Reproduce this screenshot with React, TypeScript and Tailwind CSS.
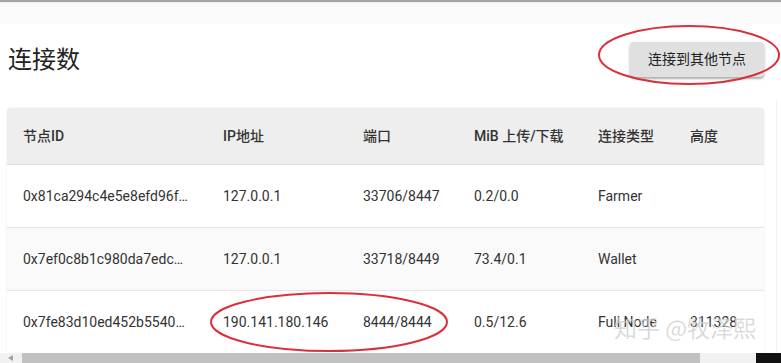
import React from "react";

const rows = [
  { id: "0x81ca294c4e5e8efd96f0a1b2c3d4", ip: "127.0.0.1", port: "33706/8447", mib: "0.2/0.0", type: "Farmer", h: "", bg: "bg-white" },
  { id: "0x7ef0c8b1c980da7edc0a1b2c3d4e", ip: "127.0.0.1", port: "33718/8449", mib: "73.4/0.1", type: "Wallet", h: "", bg: "bg-[#fafafa]" },
  { id: "0x7fe83d10ed452b55400a1b2c3d4e", ip: "190.141.180.146", port: "8444/8444", mib: "0.5/12.6", type: "Full Node", h: "311328", bg: "bg-white" },
];

const font = { fontFamily: 'Roboto, "Noto Sans CJK SC", sans-serif' };

export default function App() {
  return (
    <div className="relative w-[781px] h-[363px] overflow-hidden bg-white text-[#212121]" style={font}>
      <div className="h-[2px] bg-[#a3a3a3]" />
      <div className="h-[22px] bg-[#fafafa] border-t border-[#f0f0f0]" />
      <div className="flex items-center justify-between pl-[8px] pr-[17px] pt-[1px] h-[70px]">
        <h1 className="text-[24px] leading-[32px] font-normal text-[#222]">连接数</h1>
        <button className="h-[35px] w-[134px] rounded-[4px] bg-[#e0e0e0] text-[14px] text-[#222] shadow-[0_2px_2px_rgba(0,0,0,0.25),0_1px_4px_rgba(0,0,0,0.12)]">
          连接到其他节点
        </button>
      </div>
      <div className="ml-[7px] mt-[14px] w-[757px] rounded-t-[4px] overflow-hidden shadow-[0_0_2px_rgba(0,0,0,0.12)]">
        <div className="flex h-[57px] items-center bg-[#eeeeee] border-b border-[#e0e0e0] text-[14px] font-medium text-[#333]">
          <div className="w-[200px] shrink-0 px-4">节点ID</div>
          <div className="w-[140px] shrink-0 px-4">IP地址</div>
          <div className="w-[111px] shrink-0 px-4">端口</div>
          <div className="w-[124px] shrink-0 px-4">MiB 上传/下载</div>
          <div className="w-[92px] shrink-0 px-4">连接类型</div>
          <div className="w-[90px] shrink-0 px-4">高度</div>
        </div>
        {rows.map((r, i) => (
          <div key={i} className={`flex h-[63px] items-center border-b border-[#e6e6e6] text-[14px] text-[#333] ${r.bg}`}>
            <div className="w-[200px] shrink-0 pl-4 pr-[17px] truncate">{r.id}</div>
            <div className="w-[140px] shrink-0 px-4">{r.ip}</div>
            <div className="w-[111px] shrink-0 px-4">{r.port}</div>
            <div className="w-[124px] shrink-0 px-4">{r.mib}</div>
            <div className="w-[92px] shrink-0 px-4 whitespace-nowrap">{r.type}</div>
            <div className="w-[90px] shrink-0 px-4">{r.h}</div>
          </div>
        ))}
      </div>
      <div className="absolute top-[100px] left-[776px] w-px h-[253px] bg-[#f2f2f2]" />
      {/* scrollbar */}
      <div className="absolute left-0 top-[353px] flex h-[10px] w-[781px]">
        <div className="w-[22px] bg-[#f1f1f1] flex items-center justify-center">
          <svg width="6" height="6" viewBox="0 0 6 6"><path d="M5 0 L5 6 L0 3 Z" fill="#a0a0a0" /></svg>
        </div>
        <div className="w-[678px] bg-[#c1c1c1]" />
        <div className="w-[56px] bg-[#f1f1f1]" />
        <div className="flex-1 bg-[#111]" />
      </div>
      {/* watermark */}
      <div
        className="absolute left-[614px] top-[311px] text-[23px] leading-[32px] text-[rgba(190,190,190,0.7)] whitespace-nowrap"
        style={{ fontFamily: '"Noto Sans CJK SC", sans-serif', WebkitTextStroke: "0.5px rgba(255,255,255,0.6)" }}
      >
        知乎 @牧泽熙
      </div>
      {/* annotations */}
      <svg className="absolute left-0 top-0 pointer-events-none" width="781" height="363">
        <ellipse cx="689" cy="55" rx="90" ry="29" fill="none" stroke="#d9303a" strokeWidth="2" />
        <ellipse cx="329" cy="322" rx="118" ry="29" fill="none" stroke="#d9303a" strokeWidth="2" />
      </svg>
    </div>
  );
}
